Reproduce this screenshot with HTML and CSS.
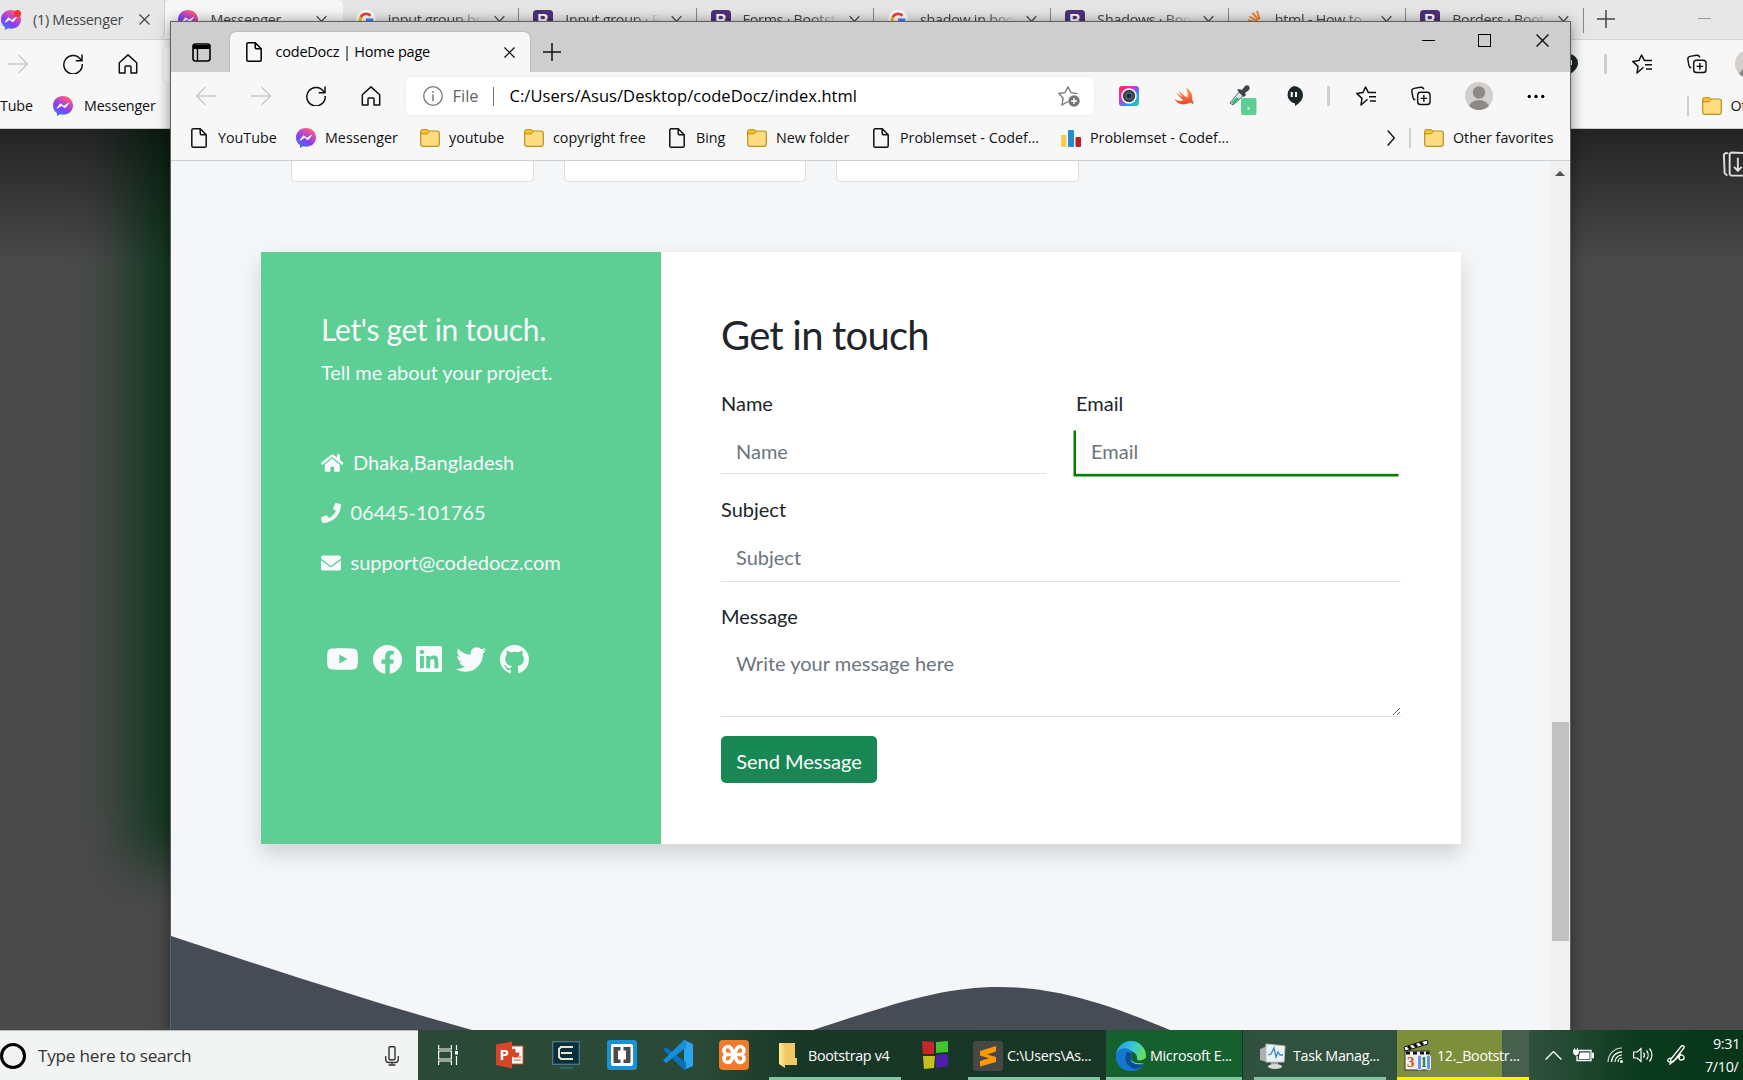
FILE: index.html
```html
<!DOCTYPE html>
<html lang="en">
<head>
<meta charset="utf-8">
<title>codeDocz | Home page</title>
<link rel="stylesheet" href="styles.css">
</head>
<body>
<svg class="defs" aria-hidden="true">
  <defs>
    <linearGradient id="msg" x1="0" y1="1" x2=".6" y2="0"><stop offset="0" stop-color="#1f8cff"/><stop offset=".5" stop-color="#8a3cf7"/><stop offset="1" stop-color="#ff5a80"/></linearGradient>
    <linearGradient id="rain" x1="0" y1="0" x2="1" y2="1"><stop offset="0" stop-color="#ff2a3c"/><stop offset=".35" stop-color="#e62ad0"/><stop offset=".65" stop-color="#2f8df5"/><stop offset="1" stop-color="#20e0a0"/></linearGradient>
    <linearGradient id="swf" x1="0" y1="0" x2="0" y2="1"><stop offset="0" stop-color="#f9a050"/><stop offset="1" stop-color="#f2402c"/></linearGradient>
    <linearGradient id="edge1" x1="0" y1="0" x2="1" y2=".3"><stop offset="0" stop-color="#1d9ee6"/><stop offset=".6" stop-color="#38c8d8"/><stop offset="1" stop-color="#66e05a"/></linearGradient>
    <linearGradient id="fold" x1="0" y1="0" x2="1" y2="0"><stop offset="0" stop-color="#ffe9a2"/><stop offset="1" stop-color="#f3cc63"/></linearGradient>
  </defs>
  <symbol id="i-fwd" viewBox="0 0 20 20"><path d="M0 10h19M10.500 1l9 9-9 9" fill="none" stroke="currentColor" stroke-width="1.300"/></symbol>
  <symbol id="i-back" viewBox="0 0 20 20"><path d="M20 10H1M9.500 1l-9 9 9 9" fill="none" stroke="currentColor" stroke-width="1.300"/></symbol>
  <symbol id="i-refresh" viewBox="0 0 20 20"><path d="M18.200 6.500A9.200 9.200 0 1 0 19.200 10M19 .5v6.300h-6.300" fill="none" stroke="currentColor" stroke-width="1.500"/></symbol>
  <symbol id="i-home" viewBox="0 0 20 20"><path d="M1.300 8.700L10 .9l8.700 7.800v10.200H13v-6a1 1 0 0 0-1-1H8a1 1 0 0 0-1 1v6H1.300z" fill="none" stroke="currentColor" stroke-width="1.500" stroke-linejoin="round"/></symbol>
  <symbol id="i-page" viewBox="0 0 16 20"><path d="M2.500.8h6.700l6 6v10.900a1.500 1.500 0 0 1-1.500 1.500H2.300A1.500 1.500 0 0 1 .8 17.700V2.300A1.500 1.500 0 0 1 2.500.8zM9.200.8v4.500a1.500 1.500 0 0 0 1.500 1.500h4.500" fill="none" stroke="currentColor" stroke-width="1.500"/></symbol>
  <symbol id="i-folder" viewBox="0 0 20 18"><rect x=".7" y="2" width="18.600" height="15.300" rx="2.200" fill="#ffdc80" stroke="#b8901c" stroke-width="1.200"/><path d="M.7 5V2.200A1.600 1.600 0 0 1 2.300.6h4.900L9.500 2.500 7.200 4.800H.7z" fill="#f2c32e" stroke="#b8901c"/></symbol>
  <symbol id="i-msg" viewBox="0 0 20 20"><path d="M10 0c5.700 0 10 4 10 9.400s-4.300 9.300-10 9.300c-1 0-1.900-.1-2.800-.4L4 20v-2.800C1.500 15.500 0 12.800 0 9.400 0 4 4.300 0 10 0z" fill="url(#msg)"/><path d="M4 12.200l3.500-4.500 3.300 2.600 4.700-3-3.600 4.600-3.200-2.500z" fill="#fff" stroke="#fff"/></symbol>
  <symbol id="i-x" viewBox="0 0 12 12"><path d="M.5.5l11 11M11.500.5l-11 11" stroke="currentColor" stroke-width="1.300"/></symbol>
  <symbol id="i-chev" viewBox="0 0 12 8"><path d="M.8 1L6 6.500 11.200 1" fill="none" stroke="currentColor" stroke-width="1.300"/></symbol>
  <symbol id="i-plus" viewBox="0 0 18 18"><path d="M9 0v18M0 9h18" stroke="currentColor" stroke-width="1.500"/></symbol>
  <symbol id="i-google" viewBox="0 0 20 20"><circle cx="10" cy="10" r="10" fill="#fff"/><path d="M14.500 5.800A6 6 0 0 0 4.800 7.200" fill="none" stroke="#ea4335" stroke-width="2.800"/><path d="M4.800 7.200a6 6 0 0 0 0 5.500" fill="none" stroke="#fbbc05" stroke-width="2.800"/><path d="M4.800 12.700a6 6 0 0 0 9.500 1.600" fill="none" stroke="#34a853" stroke-width="2.800"/><path d="M10 9.800h6a6 6 0 0 1-1.700 4.500" fill="none" stroke="#4285f4" stroke-width="2.800"/></symbol>
  <symbol id="i-boot" viewBox="0 0 20 20"><rect width="20" height="20" rx="3.500" fill="#4e3278"/><text x="10" y="16" text-anchor="middle" class="g-letter" fill="#fff">B</text></symbol>
  <symbol id="i-so" viewBox="0 0 20 20"><path d="M5 10.500l9 2M6.300 6.500l8 4.500M9.500 2.800l6 7M14 .8l2.600 8.400" stroke="#f48024" stroke-width="1.900"/><path d="M2 12v7h14v-7" fill="none" stroke="#aaa" stroke-width="1.800"/></symbol>
  <symbol id="i-favs" viewBox="0 0 20 20"><path d="M11.500 13.300L5 19l1-6.600-5.300-5 6.200-.8L9.600 1l2.800 5.600h7.600M13 10.800h7M14 15h6" fill="none" stroke="currentColor" stroke-width="1.500" stroke-linejoin="round"/></symbol>
  <symbol id="i-coll" viewBox="0 0 21 20"><path d="M4.500 14A3 3 0 0 1 2 11.500L.9 5.300A3 3 0 0 1 3.200 2L10 .8a3 3 0 0 1 3.400 2.300" fill="none" stroke="currentColor" stroke-width="1.500"/><rect x="7" y="6" width="13" height="13" rx="3" fill="none" stroke="currentColor" stroke-width="1.500"/><path d="M13.500 9v7M10 12.500h7" stroke="currentColor" stroke-width="1.500"/></symbol>
  <symbol id="i-hang" viewBox="0 0 18 20"><path d="M9 0a9 9 0 0 1 9 9c0 5-4 8.500-8 11v-2.500A9 9 0 0 1 9 0z" fill="#1d2629"/><path d="M6.700 6v5M11 6v5" stroke="#fff" stroke-width="2"/></symbol>
  <symbol id="i-user" viewBox="0 0 28 28"><clipPath id="uc"><circle cx="14" cy="14" r="14"/></clipPath><g clip-path="url(#uc)"><rect width="28" height="28" fill="#d2cfcc"/><circle cx="14" cy="10.500" r="6.200" fill="#8d8986"/><ellipse cx="14" cy="25.500" rx="10" ry="7.500" fill="#8d8986"/></g></symbol>
</svg>

<div class="desktop">
  <section class="backwin">
    <div class="btabs">
      <div class="btab first"><svg class="ti"><use href="#i-msg"/></svg><i class="dot"></i><span>(1) Messenger</span><svg class="tx"><use href="#i-x"/></svg></div>
      <div class="btab on"><svg class="ti"><use href="#i-msg"/></svg><span>Messenger</span><svg class="tc"><use href="#i-chev"/></svg></div>
      <div class="btab"><svg class="ti"><use href="#i-google"/></svg><span class="fade">input group bo</span><svg class="tc"><use href="#i-chev"/></svg></div>
      <div class="btab"><svg class="ti"><use href="#i-boot"/></svg><span class="fade">Input group · B</span><svg class="tc"><use href="#i-chev"/></svg></div>
      <div class="btab"><svg class="ti"><use href="#i-boot"/></svg><span class="fade">Forms · Bootst</span><svg class="tc"><use href="#i-chev"/></svg></div>
      <div class="btab"><svg class="ti"><use href="#i-google"/></svg><span class="fade">shadow in boo</span><svg class="tc"><use href="#i-chev"/></svg></div>
      <div class="btab"><svg class="ti"><use href="#i-boot"/></svg><span class="fade">Shadows · Boo</span><svg class="tc"><use href="#i-chev"/></svg></div>
      <div class="btab"><svg class="ti"><use href="#i-so"/></svg><span class="fade">html - How to</span><svg class="tc"><use href="#i-chev"/></svg></div>
      <div class="btab"><svg class="ti"><use href="#i-boot"/></svg><span class="fade">Borders · Boot</span><svg class="tc"><use href="#i-chev"/></svg></div>
      <svg class="plus"><use href="#i-plus"/></svg><i class="bmin"></i>
    </div>
    <div class="btool">
      <div class="slot off"><svg class="ic"><use href="#i-fwd"/></svg></div>
      <div class="slot"><svg class="ic"><use href="#i-refresh"/></svg></div>
      <div class="slot"><svg class="ic"><use href="#i-home"/></svg></div>
      <div class="burl"></div>
      <div class="slot"><svg class="ic"><use href="#i-hang"/></svg></div>
      <i class="sep"></i>
      <div class="slot wide"><svg class="ic"><use href="#i-favs"/></svg></div>
      <div class="slot"><svg class="ic"><use href="#i-coll"/></svg></div>
      <svg class="user"><use href="#i-user"/></svg>
    </div>
    <div class="bbook">
      <span class="ytube">Tube</span><svg class="ic"><use href="#i-msg"/></svg><span class="bm">Messenger</span>
      <i class="sep"></i><svg class="fi"><use href="#i-folder"/></svg><span>Other favorites</span>
    </div>
    <div class="bbody"><i class="glow"></i><i class="shade"></i>
      <svg class="dl" viewBox="0 0 24 28"><path d="M6 2.500L3.500 2 1.500 3.500l.8 19.500L5 25.500M9 1.500l15 .8M9 1.500L7.500 3v21L9 25.500h15M16 7v13M12 16.500l4 4 4-4" fill="none" stroke="#ddd" stroke-width="2"/></svg>
    </div>
  </section>

  <section class="win">
    <header class="strip">
      <svg class="side" viewBox="0 0 19 19"><rect x="1" y="1" width="17" height="17" rx="2.500" fill="none" stroke="#000" stroke-width="1.600"/><path d="M1 2h17v4H1z"/><path d="M5.500 6v12" stroke="#000" stroke-width="1.300"/></svg>
      <div class="tab"><svg class="pg"><use href="#i-page"/></svg><span>codeDocz | Home page</span><svg class="tx"><use href="#i-x"/></svg></div>
      <svg class="plus"><use href="#i-plus"/></svg>
      <div class="ctl"><i class="min"></i><i class="max"></i><svg><use href="#i-x"/></svg></div>
    </header>
    <div class="tool">
      <div class="slot off"><svg class="ic"><use href="#i-back"/></svg></div>
      <div class="slot off"><svg class="ic"><use href="#i-fwd"/></svg></div>
      <div class="slot"><svg class="ic"><use href="#i-refresh"/></svg></div>
      <div class="slot"><svg class="ic"><use href="#i-home"/></svg></div>
      <div class="url">
        <svg class="info" viewBox="0 0 20 20"><circle cx="10" cy="10" r="9.300" fill="none" stroke="#777" stroke-width="1.300"/><path d="M10 8.500V15M10 5v1.700" stroke="#777" stroke-width="1.500"/></svg>
        <span class="file">File</span><i class="usep"></i><span class="addr">C:/Users/Asus/Desktop/codeDocz/index.html</span>
        <svg class="star" viewBox="0 0 22 21"><path d="M10 15.500L4 19l1.200-6.800L.9 7.500l6-.9L10 1l3 5.600 6.500 1" fill="none" stroke="#777" stroke-width="1.300"/><circle cx="16" cy="15" r="5.700" fill="#757575"/><path d="M16 12v6M13 15h6" stroke="#fff" stroke-width="1.400"/></svg>
      </div>
      <div class="slot"><svg class="ic" viewBox="0 0 20 20"><rect width="20" height="20" rx="3" fill="url(#rain)"/><circle cx="10" cy="10" r="7" fill="#3b4650" stroke="#fff" stroke-width="1.500"/><circle cx="10" cy="10" r="3" fill="#1b2833" stroke="#67819a" stroke-width=".8"/></svg></div>
      <div class="slot"><svg class="ic" viewBox="0 0 20 20"><path d="M12 1.500c5 3.500 7 8 6 12 1.500 2 1.500 4 1 5-1.200-2-3-2-4.500-1.200C9 20 3 17.500.5 13c3 2 6.500 2.500 8.800 1.200C6 11.500 3.500 8.500 2 6c3 2.500 5 4 7 5.200C7 9 5.500 7 4.500 5c3.500 3 6 5 9 6.700.6-3.500 0-7-1.500-10.200z" fill="url(#swf)"/></svg></div>
      <div class="slot"><svg class="pick" viewBox="0 0 28 30"><path d="M1 18l9-11 4 4-10 9z" fill="#d7e5df" stroke="#567" stroke-width="1"/><path d="M2.500 17.500l5-5 3 1-6 6z" fill="#2fba7a"/><path d="M8 5l7 7 2-2-1-2 4-3c2-3-1-6-4-4l-3 4-3-1z" fill="#3d4547"/><rect x="12" y="13" width="15.500" height="17" rx="2" fill="#5dcf95"/><path d="M18.500 22.500h2v2h-2z" fill="#fff"/></svg></div>
      <div class="slot"><svg class="ic"><use href="#i-hang"/></svg></div>
      <i class="sep"></i>
      <div class="slot wide"><svg class="ic"><use href="#i-favs"/></svg></div>
      <div class="slot"><svg class="ic"><use href="#i-coll"/></svg></div>
      <svg class="user"><use href="#i-user"/></svg>
      <svg class="more" viewBox="0 0 16 4"><circle cx="2" cy="2" r="1.500"/><circle cx="8" cy="2" r="1.500"/><circle cx="14" cy="2" r="1.500"/></svg>
    </div>
    <nav class="book">
      <a><svg class="pg"><use href="#i-page"/></svg><span>YouTube</span></a>
      <a><svg><use href="#i-msg"/></svg><span>Messenger</span></a>
      <a><svg><use href="#i-folder"/></svg><span>youtube</span></a>
      <a><svg><use href="#i-folder"/></svg><span>copyright free</span></a>
      <a><svg class="pg"><use href="#i-page"/></svg><span>Bing</span></a>
      <a><svg><use href="#i-folder"/></svg><span>New folder</span></a>
      <a><svg class="pg"><use href="#i-page"/></svg><span>Problemset - Codef...</span></a>
      <a><svg viewBox="0 0 20 18"><rect y="6" width="5.500" height="12" rx="1" fill="#f8cc50"/><rect x="7" y="1" width="6" height="17" rx="1" fill="#1f8dd0"/><rect x="14.500" y="8" width="5.500" height="10" rx="1" fill="#b91f2a"/></svg><span>Problemset - Codef...</span></a>
      <svg class="gt" viewBox="0 0 8 16"><path d="M.7.5L7.300 8 .7 15.500" fill="none" stroke="#111" stroke-width="1.400"/></svg>
      <i class="sep"></i>
      <a><svg><use href="#i-folder"/></svg><span>Other favorites</span></a>
    </nav>
    <div class="view">
      <main class="page">
        <div class="cards"><i></i><i></i><i></i></div>
        <div class="contact">
          <aside>
            <h3>Let's get in touch.</h3>
            <p class="sub">Tell me about your project.</p>
            <ul class="info-list">
              <li><svg class="house" viewBox="0 0 576 512"><path d="M280.370 148.260L96 300.110V464a16 16 0 0 0 16 16l112.060-.29a16 16 0 0 0 15.920-16V368a16 16 0 0 1 16-16h64a16 16 0 0 1 16 16v95.640a16 16 0 0 0 16 16.050L464 480a16 16 0 0 0 16-16V300L295.670 148.260a12.190 12.190 0 0 0-15.300 0zM571.600 251.470L488 182.560V44.050a12 12 0 0 0-12-12h-56a12 12 0 0 0-12 12v72.610L318.470 43a48 48 0 0 0-61 0L4.340 251.470a12 12 0 0 0-1.600 16.900l25.500 31A12 12 0 0 0 45.150 301l235.220-193.740a12.190 12.190 0 0 1 15.300 0L530.900 301a12 12 0 0 0 16.900-1.600l25.500-31a12 12 0 0 0-1.700-16.930z"/></svg>Dhaka,Bangladesh</li>
              <li><svg viewBox="0 0 512 512"><path d="M493.400 24.600l-104-24c-11.300-2.600-22.900 3.300-27.500 13.900l-48 112c-4.200 9.800-1.400 21.300 6.900 28l60.600 49.600c-36 76.700-98.900 140.500-177.200 177.200l-49.600-60.600c-6.800-8.300-18.200-11.100-28-6.900l-112 48C3.900 366.500-2 378.100.6 389.400l24 104C27.100 504.200 36.700 512 48 512c256.100 0 464-207.500 464-464 0-11.200-7.700-20.900-18.600-23.400z"/></svg>06445-101765</li>
              <li><svg viewBox="0 0 512 512"><path d="M502.300 190.800c3.900-3.100 9.700-.2 9.700 4.700V400c0 26.500-21.500 48-48 48H48c-26.500 0-48-21.500-48-48V195.600c0-5 5.700-7.800 9.700-4.700 22.400 17.400 52.100 39.500 154.100 113.600 21.100 15.400 56.700 47.800 92.200 47.600 35.700.3 72-32.800 92.300-47.600 102-74.100 131.600-96.300 154-113.700zM256 320c23.200.4 56.600-29.200 73.400-41.400 132.700-96.300 142.800-104.700 173.400-128.700 5.800-4.500 9.200-11.500 9.200-18.900v-19c0-26.500-21.500-48-48-48H48c-26.500 0-48 21.500-48 48v19c0 7.400 3.400 14.300 9.200 18.900 30.600 23.900 40.700 32.400 173.400 128.700 16.800 12.200 50.200 41.800 73.400 41.400z"/></svg>support@codedocz.com</li>
            </ul>
            <div class="social">
              <svg class="yt" viewBox="14 64 548 384"><path fill-rule="evenodd" d="M549.655 124.083c-6.281-23.650-24.787-42.276-48.284-48.597C458.781 64 288 64 288 64S117.220 64 74.629 75.486c-23.497 6.322-42.003 24.947-48.284 48.597-11.412 42.867-11.412 132.305-11.412 132.305s0 89.438 11.412 132.305c6.281 23.650 24.787 41.500 48.284 47.821C117.220 448 288 448 288 448s170.780 0 213.371-11.486c23.497-6.321 42.003-24.171 48.284-47.821 11.412-42.867 11.412-132.305 11.412-132.305s0-89.438-11.412-132.305zM232 337.600V175.200l142.800 81.200z"/></svg>
              <svg class="fb" viewBox="8 8 496 496"><path d="M504 256C504 119 393 8 256 8S8 119 8 256c0 123.780 90.690 226.380 209.250 245V327.690h-63V256h63v-54.640c0-62.150 37-96.480 93.670-96.480 27.140 0 55.520 4.840 55.520 4.840v61h-31.280c-30.800 0-40.410 19.120-40.410 38.730V256h68.780l-11 71.690h-57.780V501C413.310 482.380 504 379.780 504 256z"/></svg>
              <svg class="li" viewBox="0 32 448 448"><path d="M416 32H31.900C14.300 32 0 46.500 0 64.300v383.400C0 465.500 14.300 480 31.900 480H416c17.600 0 32-14.500 32-32.300V64.300c0-17.800-14.400-32.300-32-32.300zM135.400 416H69V202.200h66.500V416zm-33.200-243c-21.300 0-38.500-17.300-38.500-38.500S80.900 96 102.200 96c21.200 0 38.500 17.300 38.500 38.500 0 21.300-17.200 38.500-38.500 38.500zm282.100 243h-66.400V312c0-24.800-.5-56.700-34.500-56.700-34.600 0-39.900 27-39.900 54.900V416h-66.400V202.200h63.700v29.200h.9c8.900-16.800 30.600-34.500 62.900-34.500 67.200 0 79.700 44.300 79.700 101.900V416z"/></svg>
              <svg class="tw" viewBox="0 48 512 416"><path d="M459.370 151.716c.325 4.548.325 9.097.325 13.645 0 138.720-105.583 298.558-298.558 298.558-59.452 0-114.680-17.219-161.137-47.106 8.447.974 16.568 1.299 25.340 1.299 49.055 0 94.213-16.568 130.274-44.832-46.132-.975-84.792-31.188-98.112-72.772 6.498.974 12.995 1.624 19.818 1.624 9.421 0 18.843-1.300 27.614-3.573-48.081-9.747-84.143-51.980-84.143-102.985v-1.299c13.969 7.797 30.214 12.670 47.431 13.319-28.264-18.843-46.781-51.005-46.781-87.391 0-19.492 5.197-37.360 14.294-52.954 51.655 63.675 129.300 105.258 216.365 109.807-1.624-7.797-2.599-15.918-2.599-24.040 0-57.828 46.782-104.934 104.934-104.934 30.213 0 57.502 12.670 76.670 33.137 23.715-4.548 46.456-13.320 66.599-25.340-7.798 24.366-24.366 44.833-46.132 57.827 21.117-2.273 41.584-8.122 60.426-16.243-14.292 20.791-32.161 39.308-52.628 54.253z"/></svg>
              <svg class="fb" viewBox="0 0 16 16"><path d="M8 0C3.580 0 0 3.580 0 8c0 3.540 2.290 6.530 5.470 7.590.4.070.55-.17.55-.38 0-.19-.01-.82-.01-1.490-2.010.37-2.530-.49-2.690-.94-.09-.23-.48-.94-.82-1.130-.28-.15-.68-.52-.01-.53.63-.01 1.080.58 1.230.82.72 1.210 1.870.87 2.330.66.070-.52.28-.87.51-1.070-1.780-.2-3.640-.89-3.640-3.950 0-.87.31-1.590.82-2.150-.08-.2-.36-1.020.08-2.120 0 0 .67-.21 2.200.82.64-.18 1.320-.27 2-.27s1.360.09 2 .27c1.530-1.040 2.200-.82 2.200-.82.44 1.100.16 1.920.08 2.120.51.56.82 1.270.82 2.150 0 3.070-1.870 3.750-3.650 3.950.29.25.54.73.54 1.480 0 1.070-.01 1.930-.01 2.200 0 .21.15.46.55.38A8.010 8.010 0 0 0 16 8c0-4.420-3.580-8-8-8z"/></svg>
            </div>
          </aside>
          <form>
            <h2>Get in touch</h2>
            <div class="row">
              <label>Name<input type="text" placeholder="Name"></label>
              <label>Email<input type="text" class="focus" placeholder="Email"></label>
            </div>
            <label>Subject<input type="text" placeholder="Subject"></label>
            <label class="msg">Message<textarea rows="2" placeholder="Write your message here"></textarea></label>
            <button type="button">Send Message</button>
          </form>
        </div>
        <svg class="wave" viewBox="0 0 1379 94"><path d="M0 0C100 33 200 66 301 94H0zM642 94C730 65 775 51 828 51S930 65 999 94z"/></svg>
      </main>
      <div class="scroll"><svg viewBox="0 0 10 5"><path d="M0 5l5-5 5 5z"/></svg><i></i></div>
    </div>
  </section>

  <footer class="bar">
    <div class="search"><i class="ring"></i><span>Type here to search</span><svg viewBox="0 0 14 20"><rect x="4" y=".7" width="6" height="13" rx="1" fill="none" stroke="#333" stroke-width="1.400"/><path d="M.7 10v3.500A3 3 0 0 0 3.700 16.500h6.600a3 3 0 0 0 3-3V10M7 16.500v3M3.500 19h7" fill="none" stroke="#333" stroke-width="1.300"/></svg></div>
    <div class="ap"><svg width="20" height="20" viewBox="0 0 20 20"><path d="M.6 0v4h12.800V0M.6 20v-4h12.800v4M.6 6h12.800v8H.6zM18.500 0v5M18.500 11v9" fill="none" stroke="#fff" stroke-width="1.200"/><path d="M17 6h3v3.500h-3z" fill="#fff"/></svg></div>
    <div class="ap"><svg width="28" height="28" viewBox="0 0 28 28"><rect x="14" y="5" width="13" height="18" fill="#fff" stroke="#d24726"/><path d="M18 16h7M18 19h7M19 8a4 4 0 1 0 4 4h-4z" fill="#d24726" stroke="#d24726"/><path d="M0 3.500L16 .5v27L0 24z" fill="#d24726"/><text x="8" y="19" class="p-letter" text-anchor="middle" fill="#fff">P</text></svg></div>
    <div class="ap"><svg width="28" height="28" viewBox="0 0 28 28"><rect x=".7" y=".7" width="26.600" height="22.600" fill="#07303c" stroke="#4f7380" stroke-width="1.400"/><path d="M21 6H9L7 8v8l2 2h12M9 12h11" fill="none" stroke="#e8e4d0" stroke-width="2"/><path d="M8 26.800h13" stroke="#2f6c80" stroke-width="1.500"/></svg></div>
    <div class="ap"><svg width="30" height="30" viewBox="0 0 30 30"><rect width="30" height="30" rx="3" fill="#1a93d6"/><rect x="4" y="4" width="22" height="22" rx="2" fill="#fff"/><path d="M13.500 7H6.500v16h7v-3.500H11v-9h2.500zM16.500 7h7v16h-7v-3.500H19v-9h-2.500z" fill="#4a4a4a"/></svg></div>
    <div class="ap"><svg width="30" height="30" viewBox="0 0 30 30"><path d="M21 0l9 4v22l-9 4z" fill="#2aa5ee"/><path d="M0 9.500L3 7l20 15.500V30h-2z" fill="#0a72bd"/><path d="M0 20.500L3 23 23 7.500V0h-2z" fill="#178fdc"/></svg></div>
    <div class="ap"><svg width="30" height="30" viewBox="0 0 30 30"><rect width="30" height="30" rx="4" fill="#ee7c2c"/><path d="M9 6.500a4 4 0 0 0 0 8h12a4 4 0 0 0 0-8c-4 0-4 5-6 8s-2 8-6 8a4 4 0 0 1 0-8M9 6.500c4 0 4 5 6 8s2 8 6 8a4 4 0 0 0 0-8" fill="none" stroke="#fff" stroke-width="3.600"/></svg></div>
    <div class="task t1 run"><svg width="20" height="27" viewBox="0 0 20 27"><path d="M3 1h14v15h2v7H4z" fill="#f0c965"/><path d="M1 1h3l3 4v21l-6-4z" fill="url(#fold)"/></svg><span>Bootstrap v4</span></div>
    <div class="ap sq"><svg width="28" height="30" viewBox="0 0 28 30"><path d="M1 1l12 1v12H2z" fill="#c9252b"/><path d="M15 2l12-1v11l-12 1z" fill="#43c32f"/><path d="M2 16h12l-1 12-10 1z" fill="#c6bd1f"/><path d="M15 15l12-1v12l-12 2z" fill="#4c1fae"/></svg></div>
    <div class="task t2 run"><svg width="30" height="30" viewBox="0 0 30 30"><rect width="30" height="30" rx="3" fill="#474747"/><path d="M7 10l16-5v5.500L14 13.500l9 2.500v5L7 25.500V20l9-2.800-9-2.700z" fill="#ff9800"/></svg><span>C:\Users\As...</span></div>
    <div class="task t3 run"><svg width="30" height="30" viewBox="0 0 30 30"><circle cx="15" cy="15" r="15" fill="url(#edge1)"/><path d="M0 15C1 8 8 6 12 8c5 2 5 6 3 8-2 5 3 9 13 7-4 6-10 8-15 7C5 29 0 23 0 15z" fill="#1478cf"/><path d="M11 11c-4 7 0 16 9 17 4-1 7-3 8-5-9 2-15-2-13-7 1-2 0-5-4-5z" fill="#0d4b94"/><path d="M15 16c-1 4 4 6 8 6l7 1 0-6c-4 3-9 3-9 1 1-4-3-8-8-8 3 1 3 4 2 6z" fill="#16602f"/></svg><span>Microsoft E...</span></div>
    <div class="task t4 run"><svg width="28" height="26" viewBox="0 0 28 26"><path d="M1 6l7-3v16l-7-2z" fill="#a9b1b0"/><path d="M7 1l19 2-1 16H7z" fill="#eaf2f5" stroke="#b9c3c4"/><path d="M9 12l3-1 3-6 2 9 2-5 2 3h3" fill="none" stroke="#3b83c5" stroke-width="1.300"/><path d="M12 19h7v3h-7z" fill="#9ca5a5"/><ellipse cx="16" cy="23.500" rx="7" ry="2.500" fill="#d7dcdb"/></svg><span>Task Manag...</span></div>
    <div class="task t5 run"><svg width="30" height="31" viewBox="0 0 30 31"><rect x="2" y="11" width="24" height="19" fill="#eee" stroke="#333"/><path d="M1 7L24 0l1 4L2 11z" fill="#fff" stroke="#111"/><path d="M5 6l3 3M11 4l3 3M17 2l3 3M3 13h4M10 13h4M17 13h4M23 13h3" stroke="#111" stroke-width="3"/><text x="4" y="27" class="d-letter" fill="#d8501c">3</text><text x="17" y="27" class="d-letter" fill="#1a8a3a">1</text><rect x="14.500" y="15" width="4" height="15" rx="2" fill="#6a92ea" stroke="#eef"/><rect x="23.500" y="15" width="4" height="15" rx="2" fill="#6a92ea" stroke="#eef"/></svg><span>12._Bootstr...</span></div>
    <div class="tray">
      <svg width="17" height="9" viewBox="0 0 17 9"><path d="M.6 8.500l7.900-8 7.900 8" fill="none" stroke="#fff" stroke-width="1.300"/></svg>
      <svg width="21" height="14" viewBox="0 0 21 14"><path d="M6 2.500h12v10H4V8" fill="none" stroke="#fff" stroke-width="1.300"/><path d="M7 4.500h9.500v6.500H6V8z" fill="#fff"/><path d="M19 5h1.500v5H19zM.5 2h5v3l-1.500 2h-2L.5 5zM1.500 0v2M4.500 0v2" fill="#fff" stroke="#fff" stroke-width=".8"/></svg>
      <svg width="16" height="16" viewBox="0 0 16 16"><g fill="none" stroke="#fff" stroke-width="1.200"><path d="M1 15A14 14 0 0 1 15 1" opacity=".8"/><path d="M4.500 15A10.500 10.500 0 0 1 15 4.800M8 15a7 7 0 0 1 7-7M11 15a4 4 0 0 1 4-4"/></g><circle cx="14.500" cy="14.500" r="1.500" fill="#fff"/></svg>
      <svg width="21" height="16" viewBox="0 0 21 16"><path d="M.6 5h3.600L8 1.500v13L4.200 11H.6zM10.500 5.500a4 4 0 0 1 0 5M13.500 3.500a7 7 0 0 1 0 9M16.500 1.500a10 10 0 0 1 0 13" fill="none" stroke="#fff" stroke-width="1.200"/></svg>
      <svg width="20" height="20" viewBox="0 0 20 20"><path d="M3 19l1-5L14 1.500c2-2 4 0 2.500 2L7 16zM5 13c-6 0-5 5-1 4 5-1 8-8 11-7s3 5-1 5c-3 0-2-4 0-6" fill="none" stroke="#fff" stroke-width="1.300"/></svg>
      <div class="clock"><span>9:31</span><span>7/10/</span></div>
    </div>
  </footer>
</div>
</body>
</html>
```
FILE: styles.css
```css
* { box-sizing: border-box; }
html, body { margin: 0; height: 100%; overflow: hidden; }
body { font-family: "Open Sans", "Noto Sans", sans-serif; font-size: 14.3px; letter-spacing: -0.3px; color: #111; white-space: nowrap; }
svg { display: block; flex: none; }
i { display: block; flex: none; }
.defs { position: absolute; width: 0; height: 0; }
.g-letter { font: bold 16px "Liberation Sans", sans-serif; }
.p-letter { font: bold 15px "Open Sans", sans-serif; }
.d-letter { font: bold 15px "Liberation Serif", serif; }
.desktop { position: relative; width: 1743px; height: 1080px; overflow: hidden; background: #4a4a4a; }

/* shared browser chrome */
.slot { width: 55px; display: flex; justify-content: center; flex: none; }
.slot.wide { margin-left: 8px; }
.off { color: #c9c9c9; }
.ic { width: 20px; height: 20px; }
.sep { width: 3px; height: 20px; background: #cfcfcf; }
.user { width: 28px; height: 28px; }
.tx { width: 11px; height: 11px; }
.plus { width: 18px; height: 18px; }

/* background browser window */
.backwin { position: absolute; inset: 0 0 50px 0; display: flex; flex-direction: column; width: 1743px; overflow: hidden; }
.btabs { height: 40px; background: #e7e7e7; border-bottom: 1px solid #d2d2d2; display: flex; color: #444; }
.btab { width: 177.4px; height: 39px; flex: none; position: relative; display: flex; align-items: center; padding-left: 13px; border-right: 1px solid transparent; letter-spacing: -.25px; }
.btab.first { margin-left: -12px; border-radius: 0 0 6px 0; border-right-color: #d0d0d0; }
.btab.on { background: #f7f7f7; border-radius: 6px 6px 0 0; }
.btab:nth-child(n+3)::after { content: ""; position: absolute; right: 0; top: 8px; width: 1px; height: 25px; background: #888; }
.ti { width: 20px; height: 20px; }
.dot { position: absolute; left: 26px; top: 10px; width: 7px; height: 7px; border-radius: 50%; background: #f0362c; }
.btab span { margin: 0 0 1px 12px; width: 98px; overflow: hidden; }
.fade { -webkit-mask-image: linear-gradient(90deg, #000 68%, transparent 97%); mask-image: linear-gradient(90deg, #000 68%, transparent 97%); }
.tc { width: 11px; height: 8px; margin: 0 0 2px 8px; }
.btab .tx { margin-left: 8px; }
.btabs > .plus { margin: 10px 0 0 12.500px; }
.bmin { width: 13px; height: 1px; background: #999; margin: 18px 0 0 83px; }
.btool { height: 48px; background: #f7f7f7; display: flex; align-items: center; }
.btool > .slot:first-child { margin-left: -9.5px; }
.burl { width: 1373px; height: 37px; margin-left: 8px; background: #fff; border-radius: 5px; box-shadow: 0 0 3px rgba(0,0,0,.12); margin-right: 5px; flex: none; }
.btool .sep { margin-left: 7px; flex: none; }
.btool .user { margin-left: 10px; }
.bbook { height: 41px; background: #f7f7f7; border-bottom: 1px solid #c8c8c8; display: flex; align-items: center; padding-bottom: 5px; letter-spacing: -.15px; }
.ytube { width: 33px; flex: none; }
.bbook .ic { margin-left: 20px; }
.bm { margin-left: 11px; width: 1602.500px; flex: none; }
.bbook .fi { width: 20px; height: 18px; margin: 0 9px 0 13px; }
.bbook .sep { width: 2px; }
.bbody { flex: 1; position: relative; overflow: hidden; background: #4a4a4a; }
.glow { position: absolute; left: 130px; top: -80px; width: 260px; height: 814px; background: #10361f; filter: blur(28px); }
.shade { position: absolute; inset: 0 0 auto 0; height: 135px; background: linear-gradient(rgba(0,0,0,.52), rgba(0,0,0,0)); }
.dl { position: absolute; right: -3px; top: 22px; width: 24px; height: 27px; }

/* foreground browser window */
.win { position: absolute; left: 171px; top: 22px; width: 1398.500px; height: 1010px; display: flex; flex-direction: column; background: #f7f7f7; box-shadow: 0 0 0 1px #5f5f5f, 0 1px 14px rgba(0,0,0,.5); }
.strip { height: 50px; background: #cecece; display: flex; align-items: flex-end; }
.side { width: 19px; height: 19px; margin: 0 19px 10.500px 20.500px; }
.tab { width: 300px; height: 40px; background: #f7f7f7; border-radius: 6px 6px 0 0; display: flex; align-items: center; padding: 0 0 0 16px; font-size: 14.500px; letter-spacing: -.22px; box-shadow: 0 0 2px rgba(0,0,0,.3); color: #000; }
.tab .pg { width: 16px; height: 22px; margin-right: 14px; }
.tab span { width: 228px; padding-bottom: 1px; }
.strip .plus { margin: 0 0 11px 13px; }
.ctl { margin-left: auto; align-self: flex-start; display: flex; align-items: center; gap: 43px; padding: 12px 21px 0 0; }
.ctl .min { width: 13px; height: 1px; background: #000; }
.ctl .max { width: 13px; height: 13px; border: 1px solid #000; margin-right: 2px; }
.ctl svg { width: 13px; height: 13px; }
.tool { height: 48px; display: flex; align-items: center; padding-left: 7.500px; background: #f7f7f7; }
.url { width: 688px; height: 38px; margin: 0 8px 0 7px; background: #fff; border-radius: 5px; box-shadow: 0 0 3px rgba(0,0,0,.1); display: flex; align-items: center; padding-left: 17px; font-size: 16.500px; }
.info { width: 20px; height: 20px; margin-right: 10px; }
.file { width: 40px; color: #666; letter-spacing: 0; }
.usep { width: 1px; height: 19px; background: #777; }
.addr { margin-left: 16px; flex: 1; color: #000; letter-spacing: .05px; }
.file, .addr { padding-bottom: 1px; }
.star { width: 22px; height: 21px; margin-right: 14px; }
.pick { width: 28px; height: 30px; margin: 8px 0 0 7px; }
.tool .sep { margin-left: 5px; }
.tool .slot.wide { margin-left: 9px; }
.tool .user { margin-left: 16px; }
.more { width: 18px; height: 5px; margin-left: 34px; }
.book { height: 41px; border-bottom: 1px solid #cdd0d2; display: grid; grid-template-columns: 107px 124px 104px 143px 80px 124px 190px 326px 22px 15px 1fr; align-items: center; padding: 0 0 4px 18px; letter-spacing: 0; }
.book a { display: flex; align-items: center; }
.book a svg { width: 20px; height: 20px; margin-right: 9px; }
.book span { padding-bottom: 1px; }
.book .gt { width: 8px; height: 16px; }
.book .sep { width: 2px; }
.view { flex: 1; display: flex; min-height: 0; }
.page { flex: 1; background: #f4f6f8; overflow: hidden; font-family: Lato, sans-serif; font-size: 20px; line-height: 30px; letter-spacing: 0; display: flex; flex-direction: column; }
.cards { display: grid; grid-template-columns: repeat(3, 242.500px); gap: 30px; padding-left: 120px; height: 20.500px; flex: none; }
.cards i { background: #fff; border: 1px solid #dcdee0; border-top: 0; border-radius: 0 0 5px 5px; }
.contact { display: flex; width: 1200px; height: 592px; margin: 70.500px 0 0 90px; background: #fff; box-shadow: 0 10px 20px rgba(0,0,0,.15); flex: none; }
aside { width: 400px; background: #5dcf95; color: #f8f9fa; padding: 59px 60px; }
aside svg { fill: #f8f9fa; }
h2, h3, p, ul { margin: 0; padding: 0; font-weight: 400; }
h3 { font-size: 30px; line-height: 36px; letter-spacing: -.32px; }
.sub { margin-top: 10px; letter-spacing: -.05px; }
.info-list { list-style: none; margin-top: 60px; display: grid; gap: 20px; }
.info-list li { display: flex; align-items: center; }
.info-list svg { width: 20px; height: 20px; margin: 1px 9.500px 0 0; }
.info-list .house { width: 22.500px; }
.social { display: flex; align-items: center; margin: 67px 0 0 6px; height: 30px; }
.yt { width: 31px; height: 22px; margin-right: 15px; }
.fb { width: 29px; height: 29px; }
.li { width: 26px; height: 26px; margin: 0 14px 0 14px; }
.tw { width: 30px; height: 25px; margin-right: 14px; }
form { flex: 1; padding: 59px 60px 0; color: #212529; }
h2 { font-size: 40px; line-height: 48px; margin-bottom: 29px; letter-spacing: -.8px; }
.row { display: grid; grid-template-columns: 1fr 1fr; gap: 30px; }
label { display: block; margin-bottom: 18.500px; }
input, textarea { display: block; width: 100%; margin: 10px 0 0; height: 47.500px; padding: 7px 15px; border: 0; border-bottom: 1px solid #dee2e6; background: #fff; font: 20px/30px Lato, sans-serif; outline: 0; }
.row label { margin-bottom: 20.500px; }
.row input { height: 45.500px; padding: 8px 15px 6px; }
.msg { padding-top: 1px; }
textarea { height: 76px; padding-top: 7px; }
::placeholder { color: #6c757d; opacity: 1; }
.focus { box-shadow: -2.500px 2.500px 0 green; }
button { display: block; height: 47px; width: 156px; padding: 3px 0 0; border: 0; border-radius: 5px; background: #198754; color: #fff; font: 20px/30px Lato, sans-serif; }
.wave { width: 1379px; height: 94px; margin-top: 92px; fill: #464c56; }
.scroll { width: 19.500px; background: #f1f1f1; padding: 10px 0 0 2px; }
.scroll svg { width: 10px; height: 5px; margin-left: 3px; fill: #505050; }
.scroll i { width: 17px; height: 219px; margin-top: 546px; background: #c1c1c1; }

/* taskbar */
.bar { position: absolute; left: 0; bottom: 0; width: 1743px; height: 50px; display: flex; color: #fff; background: linear-gradient(90deg, #2b4a36 418px, #2a4936 700px, #183827 800px, #173626 1100px, #30513d 1250px, #30513d 1530px, #0b3a1e 1640px, #07351a); }
.search { width: 418px; background: #f2f4f3; border-top: 1px solid #b5b5b5; color: #333; display: flex; align-items: center; font-size: 17.200px; letter-spacing: -.25px; }
.ring { width: 26px; height: 26px; border: 3px solid #000; border-radius: 50%; margin-right: 12px; }
.search span { width: 347px; }
.search svg { width: 14px; height: 20px; }
.ap { width: 56px; display: flex; align-items: center; justify-content: center; flex: none; }
.search + .ap { margin: 0 6px 0 2px; }
.task { flex: none; display: flex; align-items: center; position: relative; height: 50px; padding-top: 1px; }
.run::after { content: ""; position: absolute; left: 0; right: 0; bottom: 0; height: 3px; background: #80c79f; }
.t1 { width: 132px; margin-left: 7px; padding-left: 9px; }
.t1 svg { margin-right: 10px; }
.sq { width: 67px; }
.t2 { width: 132px; padding-left: 5px; }
.t2 svg { margin-right: 4px; }
.t3 { width: 137px; margin-left: 6px; padding-left: 10px; background: #16602f; border-right: 1px solid #0d3c1e; }
.t3 svg { margin-right: 4px; }
.t4 { width: 132px; margin-left: 11px; padding-left: 5px; }
.t4 svg { margin-right: 6px; }
.t5 { width: 132px; margin-left: 11px; padding-left: 6px; background: linear-gradient(90deg, #7d8f3a 105px, #46604d 105px); }
.t5 svg { margin-right: 4px; }
.t5::after { background: #fff000; }
.tray { display: flex; align-items: center; flex: none; padding-left: 16px; }
.tray > svg:nth-child(2) { margin-left: 11px; }
.tray > svg:nth-child(3) { margin-left: 13px; }
.tray > svg:nth-child(4) { margin-left: 10px; }
.tray > svg:nth-child(5) { margin-left: 13px; }
.clock { display: flex; flex-direction: column; margin-left: 18px; line-height: 23px; gap: 0; letter-spacing: -.3px; }
.clock span:first-child { margin-left: 8px; }
```
